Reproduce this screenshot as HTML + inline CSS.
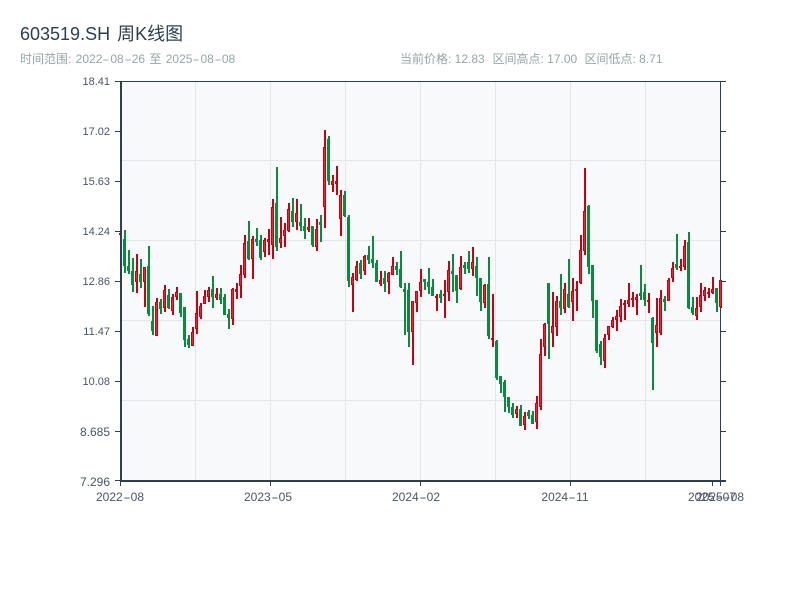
<!DOCTYPE html>
<html><head><meta charset="utf-8"><title>603519.SH 周K线图</title>
<style>
html,body{margin:0;padding:0;background:#fff;width:800px;height:600px;overflow:hidden}
body{position:relative;font-family:"Liberation Sans","Noto Sans CJK SC",sans-serif}
div{position:absolute;white-space:nowrap}
i{font-style:normal;display:inline-block;width:8px;text-align:center;transform:scaleX(1.8)}
.t{left:20px;top:22px;font-size:18px;line-height:24px;color:#2c3e50;word-spacing:2px}
.s{top:51px;font-size:12px;line-height:16px;color:#95a5a6}
.y{right:690px;font-size:11px;line-height:14px;color:#4a5568}
.x{font-size:12px;line-height:14px;top:490px;color:#4a5568;width:60px;text-align:center}
svg{position:absolute;left:0;top:0}
</style></head><body>
<div class="t">603519.SH 周K线图</div>
<div class="s" style="left:20px;word-spacing:1px">时间范围: 2022<i>-</i>08<i>-</i>26 至 2025<i>-</i>08<i>-</i>08</div>
<div class="s" style="left:400px">当前价格: 12.83</div>
<div class="s" style="left:492.5px">区间高点: 17.00</div>
<div class="s" style="left:584.5px">区间低点: 8.71</div>
<svg width="800" height="600" viewBox="0 0 800 600" shape-rendering="crispEdges" fill="none">
<rect x="121" y="81" width="599" height="399" fill="#f8f9fb"/>
<path stroke="#e3e5ea" stroke-width="1" d="M195.500 81V480M270.500 81V480M345.500 81V480M420.500 81V480M495.500 81V480M570.500 81V480M645.500 81V480M121 160.500H720M121 240.500H720M121 320.500H720M121 400.500H720"/>
<path stroke="#c8000f" stroke-width="2" d="M120 233V235"/>
<path stroke="#2c3e50" stroke-width="1" d="M115 81.500H726M720.500 81V481M115 131.500H120M115 181.500H120M115 231.500H120M115 281.500H120M115 331.500H120M115 381.500H120M115 431.500H120M115 480.500H120M721 131.500H726M721 181.500H726M721 231.500H726M721 281.500H726M721 331.500H726M721 381.500H726M721 431.500H726M721 480.500H726M120.500 482V486M270.500 482V486M420.500 482V486M570.500 482V486M712.500 482V486M720.500 482V486"/>
<path stroke="#2c3e50" stroke-width="2" d="M121 81V482M120 481H726"/>
<!-- green wicks -->
<path stroke="#0a8a3c" stroke-width="2" d="M125 230V273M129 250V274M133 258V292M141 259V288M149 246V316M153 306V335M161 299V314M169 289V309M181 293V317M185 307V347M189 335V348M213 276V308M221 288V304M225 294V315M229 309V329M249 221V260M257 228V246M261 235V260M277 167V251M293 198V227M301 204V231M305 218V239M313 226V247M321 215V242M329 136V185M345 191V217M349 215V287M361 260V279M369 246V264M373 236V268M377 260V282M385 271V292M397 262V275M401 251V288M405 283V335M409 283V347M425 279V290M429 268V294M433 279V296M441 290V303M453 254V292M457 275V303M465 262V274M469 251V273M477 257V296M481 278V311M489 257V339M497 340V380M501 376V393M505 380V412M509 397V413M513 403V418M521 405V426M529 410V419M533 411V424M549 283V359M561 274V315M569 259V308M589 205V274M593 265V318M597 300V353M601 341V365M641 265V300M645 284V306M653 317V390M665 296V311M677 234V270M689 232V309M693 297V315M717 288V312"/>
<!-- green bodies -->
<path stroke="#0a8a3c" stroke-width="2" d="M124 239V266M128 266V271M132 271V285M140 274V282M148 266V314M152 321V331M160 302V309M168 295V308M180 293V313M184 307V340M188 339V345M212 289V297M220 294V300M224 297V315M228 314V318M248 241V259M256 239V242M260 240V258M276 203V247M292 211V222M300 222V226M304 226V231M312 226V245M320 222V225M328 139V181M344 195V216M348 217V281M360 263V274M368 255V260M372 259V263M376 263V282M384 278V284M396 266V270M400 269V287M404 289V292M408 290V332M424 279V282M428 282V287M432 287V296M440 294V298M452 271V274M456 275V291M464 265V268M468 262V269M476 266V278M480 278V302M488 284V336M496 341V378M500 376V384M504 382V397M508 397V407M512 407V415M520 409V426M528 412V416M532 415V424M548 283V324M560 301V308M568 294V307M588 206V267M592 265V301M596 300V351M600 344V357M640 293V296M644 292V300M652 318V343M664 299V302M676 264V268M688 242V308M692 307V313M716 288V303"/>
<!-- red wicks -->
<path stroke="#c8000f" stroke-width="2" d="M137 254V293M145 267V307M157 298V336M165 285V312M173 294V315M177 287V300M193 327V346M197 291V334M201 303V319M205 290V304M209 287V302M217 288V300M233 288V325M237 283V299M241 265V298M245 235V278M253 236V279M265 238V257M269 229V255M273 199V259M281 217V248M285 223V247M289 203V232M297 199V230M309 218V232M317 219V251M325 130V228M333 175V192M337 166V195M341 190V236M353 273V312M357 261V281M365 255V275M381 271V286M389 272V294M393 257V275M413 301V365M417 291V312M421 269V297M437 294V311M445 280V318M449 261V301M461 256V290M473 247V276M485 284V308M493 294V347M517 406V418M525 412V430M537 396V429M541 339V410M545 323V356M553 292V347M557 296V336M565 283V313M573 278V321M577 281V311M581 235V284M585 168V255M605 334V368M609 326V340M613 317V328M617 310V331M621 299V322M625 300V320M629 283V307M633 292V307M637 294V315M649 293V313M657 298V347M661 290V335M669 278V301M673 262V282M681 259V271M685 240V270M697 297V320M701 283V312M705 287V301M709 288V298M713 277V294M721 280V308"/>
<!-- red bodies -->
<path stroke="#c8000f" stroke-width="2" d="M136 271V282M144 267V282M156 302V336M164 290V308M172 297V311M176 292V297M192 332V346M196 313V329M200 306V317M204 296V304M208 290V297M216 294V298M232 289V319M236 289V292M240 274V286M244 243V275M252 239V259M264 240V252M268 239V242M272 207V245M280 238V243M284 230V236M288 209V231M296 213V222M308 227V230M316 229V247M324 147V207M332 181V185M336 181V184M340 195V219M352 277V285M356 266V280M364 256V271M380 280V284M388 273V282M392 266V275M412 301V332M416 291V303M420 282V291M436 296V298M444 294V296M448 270V292M460 267V289M472 262V269M484 285V303M492 338V340M516 409V414M524 416V425M536 403V422M540 354V407M544 324V347M552 326V333M556 301V327M564 289V309M572 291V302M576 289V291M580 250V283M584 211V251M604 338V361M608 326V335M612 320V327M616 316V320M620 306V317M624 303V305M628 300V304M632 298V300M636 297V300M648 300V302M656 325V333M660 298V333M668 280V301M672 268V278M680 266V268M684 246V267M696 308V316M700 295V307M704 290V296M708 292V294M712 289V293M720 280V307"/>
<!-- red body highlights -->
<path stroke="#f5212d" stroke-width="1" d="M136.500 272V281M144.500 268V281M156.500 303V335M164.500 291V307M172.500 298V310M176.500 293V296M192.500 333V345M196.500 314V328M200.500 307V316M204.500 297V303M208.500 291V296M216.500 295V297M232.500 290V318M240.500 275V285M244.500 244V274M252.500 240V258M264.500 241V251M272.500 208V244M280.500 239V242M284.500 231V235M288.500 210V230M296.500 214V221M308.500 228V229M316.500 230V246M324.500 148V206M332.500 182V184M340.500 196V218M352.500 278V284M356.500 267V279M364.500 257V270M380.500 281V283M388.500 274V281M392.500 267V274M412.500 302V331M416.500 292V302M420.500 283V290M448.500 271V291M460.500 268V288M472.500 263V268M484.500 286V302M516.500 410V413M524.500 417V424M536.500 404V421M540.500 355V406M544.500 325V346M552.500 327V332M556.500 302V326M564.500 290V308M572.500 292V301M580.500 251V282M584.500 212V250M604.500 339V360M608.500 327V334M612.500 321V326M616.500 317V319M620.500 307V316M628.500 301V303M636.500 298V299M656.500 326V332M660.500 299V332M668.500 281V300M672.500 269V277M684.500 247V266M696.500 309V315M700.500 296V306M704.500 291V295M712.500 290V292M720.500 281V306"/>
</svg>
<div class="y" style="top:75px">18.41</div>
<div class="y" style="top:125px">17.02</div>
<div class="y" style="top:175px">15.63</div>
<div class="y" style="top:225px">14.24</div>
<div class="y" style="top:275px">12.86</div>
<div class="y" style="top:325px">11.47</div>
<div class="y" style="top:375px">10.08</div>
<div class="y" style="top:425px;font-size:12px">8.685</div>
<div class="y" style="top:475px;font-size:12px">7.296</div>
<div class="x" style="left:90px">2022<i>-</i>08</div>
<div class="x" style="left:238px">2023<i>-</i>05</div>
<div class="x" style="left:386px">2024<i>-</i>02</div>
<div class="x" style="left:535px">2024<i>-</i>11</div>
<div class="x" style="left:682px">2025<i>-</i>07</div>
<div class="x" style="left:690px">2025<i>-</i>08</div>
</body></html>
